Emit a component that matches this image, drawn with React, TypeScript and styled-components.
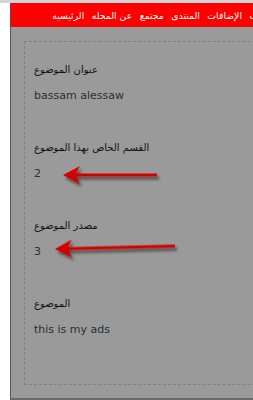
import React from "react";
import styled, { createGlobalStyle } from "styled-components";

const Global = createGlobalStyle`
  html, body { margin: 0; padding: 0; background: #ffffff; overflow: hidden; }
  body { font-family: "DejaVu Sans", "Liberation Sans", sans-serif; }
`;

const Page = styled.div`
  width: 300px;
  height: 400px;
  box-sizing: border-box;
  border-top: 3px solid #d4d4d4;
  display: flex;
  flex-direction: column;
`;

const Frame = styled.div`
  margin-left: 10px;
  flex: 1;
  display: flex;
  flex-direction: column;
  border-left: 1px solid #555555;
  border-bottom: 2px solid #6a6a6a;
  background: #9a9a9a;
`;

const MenuBar = styled.nav`
  height: 24px;
  background: #ff0000;
  display: flex;
  direction: rtl;
  align-items: center;
  gap: 7.5px;
  padding-right: 28px;
`;

const MenuItem = styled.span`
  color: #ffffff;
  font-family: "DejaVu Sans", sans-serif;
  font-size: 9.3px;
  white-space: nowrap;
`;

const Box = styled.div`
  position: relative;
  margin: 14px 0 13px 13px;
  flex: 1;
  border: 1px dashed #808080;
  border-right: none;
  padding: 21px 0 0 9px;
  display: flex;
  flex-direction: column;
  gap: 38px;
`;

const Field = styled.div`
  display: flex;
  flex-direction: column;
  gap: 12px;
`;

const Label = styled.div`
  font-family: "DejaVu Sans", sans-serif;
  font-size: 10px;
  line-height: 14px;
  color: #111111;
  direction: rtl;
  align-self: flex-start;
`;

const Value = styled.div`
  font-family: "DejaVu Sans", sans-serif;
  font-size: 11px;
  line-height: 14px;
  color: #2e2e2e;
`;

const ArrowSvg = styled.svg`
  position: absolute;
  overflow: visible;
`;

type ArrowProps = { left: number; top: number; length: number; angle: number };

const Arrow = ({ left, top, length, angle }: ArrowProps) => {
  const id = `sh${left}${top}`;
  return (
    <ArrowSvg
      width={length + 10}
      height={28}
      style={{ left, top }}
      viewBox={`0 0 ${length + 10} 28`}
    >
      <defs>
        <filter id={id} x="-20%" y="-80%" width="140%" height="260%">
          <feGaussianBlur in="SourceAlpha" stdDeviation="1.4" />
          <feOffset dx="2" dy="2.5" result="b" />
          <feComponentTransfer>
            <feFuncA type="linear" slope="0.55" />
          </feComponentTransfer>
          <feMerge>
            <feMergeNode />
            <feMergeNode in="SourceGraphic" />
          </feMerge>
        </filter>
      </defs>
      <g transform={`translate(4,12) rotate(${angle})`} filter={`url(#${id})`}>
        <path
          d={`M0 0 L17 -9 L13 -1.6 L${length} -1.6 L${length} 1.6 L13 1.6 L17 9 Z`}
          fill="#d20000"
        />
      </g>
    </ArrowSvg>
  );
};

const fields = [
  { label: "عنوان الموضوع", value: "bassam alessaw" },
  { label: "القسم الخاص بهذا الموضوع", value: "2" },
  { label: "مصدر الموضوع", value: "3" },
  { label: "الموضوع", value: "this is my ads" },
];

const menu = ["الكتب", "الإضافات", "المنتدى", "مجتمع", "عن المجله", "الرئيسيه"];

export default function App() {
  return (
    <>
      <Global />
      <Page>
        <Frame>
          <MenuBar>
            {menu.map((m) => (
              <MenuItem key={m}>{m}</MenuItem>
            ))}
          </MenuBar>
          <Box>
            {fields.map((f) => (
              <Field key={f.label}>
                <Label>{f.label}</Label>
                <Value>{f.value}</Value>
              </Field>
            ))}
            <Arrow left={34} top={121} length={94} angle={0} />
            <Arrow left={26} top={195} length={120} angle={-1.4} />
          </Box>
        </Frame>
      </Page>
    </>
  );
}
